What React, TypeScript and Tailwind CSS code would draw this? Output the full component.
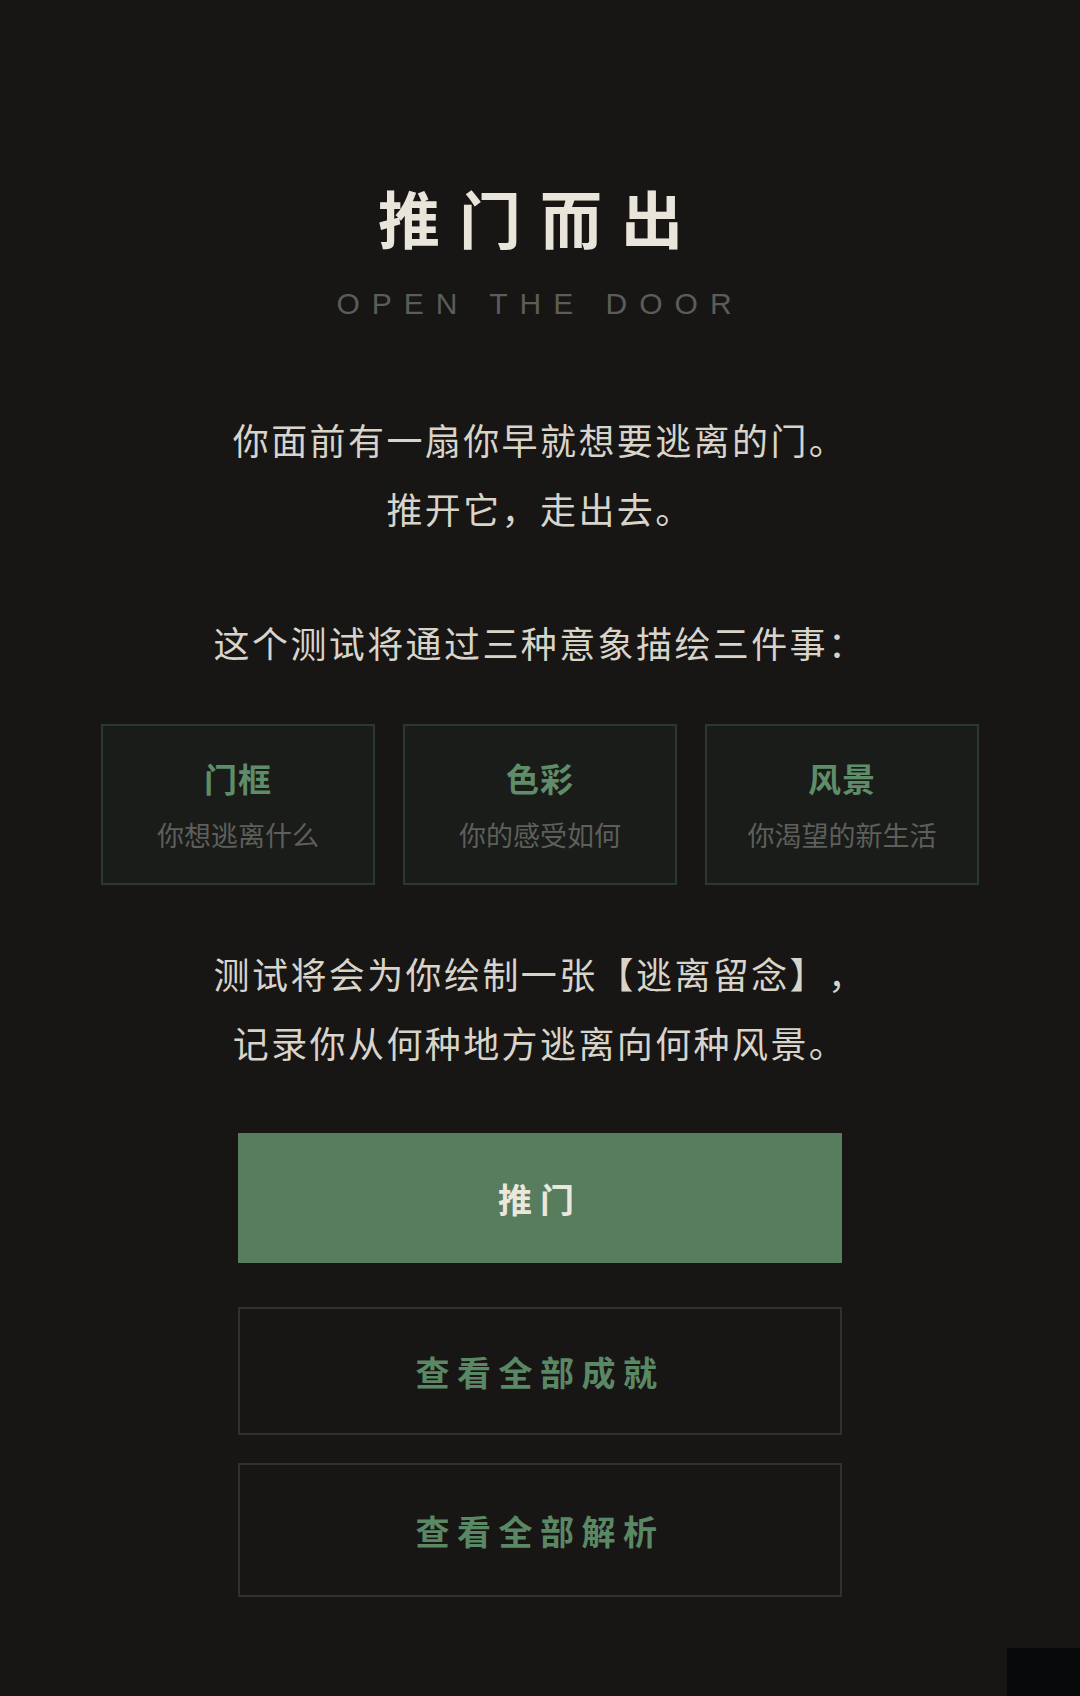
const CARDS = [
  { title: "门框", desc: "你想逃离什么" },
  { title: "色彩", desc: "你的感受如何" },
  { title: "风景", desc: "你渴望的新生活" },
];

const cjk = "font-['Noto_Sans_CJK_SC',sans-serif]";

export default function App() {
  return (
    <div
      className={`relative min-h-[1696px] w-full bg-[#171615] ${cjk} [text-spacing-trim:space-all] flex flex-col items-center`}
    >
      {/* Header */}
      <h1 className="mt-[186px] text-[62px] leading-[62px] font-bold tracking-[19px] text-[#e9e5da]">
        推门而出
      </h1>
      <p className="mt-[41px] font-['Liberation_Sans',sans-serif] text-[30px] leading-[30px] tracking-[12px] text-[#5c5c59]">
        OPEN THE DOOR
      </p>

      {/* Intro */}
      <div className="mt-[86px] text-center text-[36px] leading-[69px] tracking-[2.4px] text-[#d8d4ca]">
        <p>你面前有一扇你早就想要逃离的门。</p>
        <p>推开它，走出去。</p>
      </div>

      <p className="mt-[65px] text-center text-[36px] leading-[69px] tracking-[2.4px] text-[#d8d4ca]">
        这个测试将通过三种意象描绘三件事：
      </p>

      {/* Three cards */}
      <div className="mt-[47px] grid w-[878px] grid-cols-3 gap-[28px]">
        {CARDS.map((c) => (
          <div
            key={c.title}
            className="flex h-[161px] flex-col items-center justify-center gap-[20px] border-2 border-[#2a392f] bg-[#1a1c1a]"
          >
            <span className="text-[33px] leading-[40px] font-bold tracking-[1px] text-[#5f8c69]">
              {c.title}
            </span>
            <span className="text-[27px] leading-[34px] text-[#5e5f5b]">
              {c.desc}
            </span>
          </div>
        ))}
      </div>

      {/* Outro */}
      <div className="mt-[54px] text-center text-[36px] leading-[69px] tracking-[2.4px] text-[#d8d4ca]">
        <p>测试将会为你绘制一张【逃离留念】，</p>
        <p>记录你从何种地方逃离向何种风景。</p>
      </div>

      {/* Actions */}
      <button className="mt-[56px] flex h-[130px] w-[604px] items-center justify-center bg-[#577c5e] text-[34px] font-bold tracking-[8px] text-[#ebe7dc]">
        推门
      </button>
      <button className="mt-[44px] flex h-[128px] w-[604px] items-center justify-center border-2 border-[#31302f] text-[34px] font-bold tracking-[7.5px] text-[#5b8864]">
        查看全部成就
      </button>
      <button className="mt-[28px] flex h-[134px] w-[604px] items-center justify-center border-2 border-[#31302f] text-[34px] font-bold tracking-[7.5px] text-[#5b8864]">
        查看全部解析
      </button>

      {/* corner overlay */}
      <div className="absolute right-0 bottom-0 h-[48px] w-[73px] bg-[#07090b]" />
    </div>
  );
}
